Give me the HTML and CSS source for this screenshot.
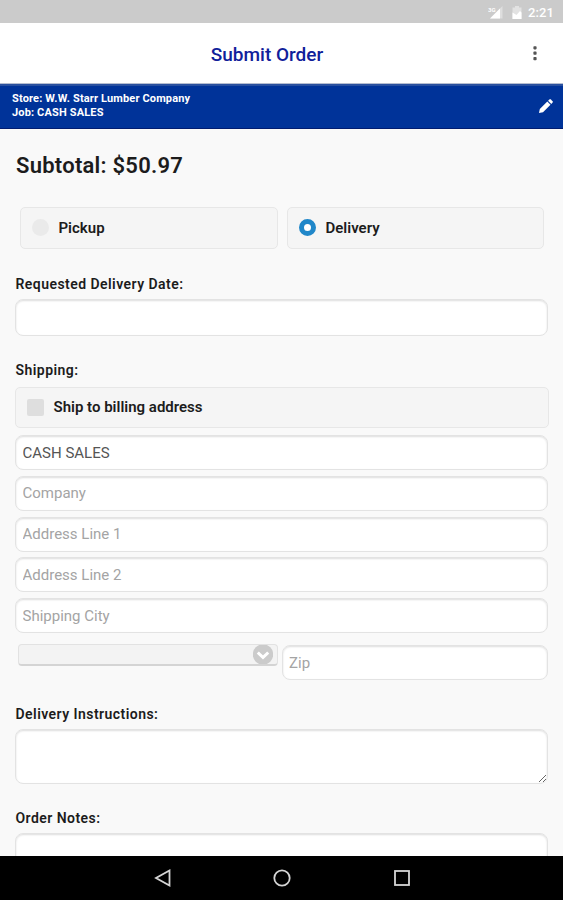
FILE: index.html
```html
<!DOCTYPE html>
<html lang="en">
<head>
  <meta charset="UTF-8" />
  <title>Submit Order</title>
  <link rel="stylesheet" href="styles.css">
</head>
<body>
  <div class="screen">
    <div class="status-bar">
      <svg class="signal-icon" width="15" height="13" viewBox="0 0 15 13">
        <path d="M14.5 0v12.5H2z" fill="#dedede" />
        <path d="M12 2.500v10H2z" fill="#fff" />
        <text x="0" y="6" class="signal-text">3G</text>
      </svg>
      <svg class="battery-icon" width="10" height="13" viewBox="0 0 10 13">
        <path d="M3 0h4v1.500h2.500V13h-9V1.500H3z" fill="#e2e2e2" />
        <path d="M.5 6.500l4 2.500L8 5l1.500 1.500V13h-9z" fill="#fff" />
      </svg>
      <span class="clock">2:21</span>
    </div>

    <header class="header">
      <h1>Submit Order</h1>
      <svg class="menu-icon" width="4" height="16" viewBox="0 0 4 16" fill="#555">
        <rect x=".4" y="1.200" width="3.200" height="3.200" rx=".8" />
        <rect x=".4" y="6.600" width="3.200" height="3.200" rx=".8" />
        <rect x=".4" y="12" width="3.200" height="3.200" rx=".8" />
      </svg>
    </header>

    <div class="store-bar">
      <div class="store-info">
        <div class="store-name">Store: W.W. Starr Lumber Company</div>
        <div class="job-name">Job: CASH SALES</div>
      </div>
      <svg class="edit-icon" width="14" height="14" viewBox="0 0 14 14" fill="#fff">
        <path d="M0 14l.8-4L8.300 2.500l3.200 3.200L4 13.200z" />
        <path d="M9.100 1.700L10.400.4q.7-.6 1.400 0l1.800 1.800q.6.700 0 1.400l-1.300 1.300z" />
      </svg>
    </div>

    <form class="content">
      <h2>Subtotal: $50.97</h2>

      <div class="methods">
        <label class="option">
          <input type="radio" name="method" class="radio" />
          <span class="pickup-text">Pickup</span>
        </label>
        <label class="option">
          <input type="radio" name="method" class="radio" checked />
          <span class="delivery-text">Delivery</span>
        </label>
      </div>

      <label class="field-label date-label" for="date">Requested Delivery Date:</label>
      <input type="text" id="date" class="field date-field" />

      <div class="field-label shipping-label">Shipping:</div>
      <label class="option billing">
        <input type="checkbox" class="checkbox" />
        <span class="billing-text">Ship to billing address</span>
      </label>

      <div class="address">
        <input type="text" class="field" value="CASH SALES" />
        <input type="text" class="field" placeholder="Company" />
        <input type="text" class="field" placeholder="Address Line 1" />
        <input type="text" class="field" placeholder="Address Line 2" />
        <input type="text" class="field" placeholder="Shipping City" />
      </div>

      <div class="state-zip">
        <div class="state-select">
          <svg width="20" height="19" viewBox="0 0 20 19">
            <circle cx="10" cy="9.500" r="10.200" fill="#cbcbcb" />
            <path d="M4.800 7.500l5.200 5 5.200-5" fill="none" stroke="#fff" stroke-width="3" />
          </svg>
        </div>
        <input type="text" class="field zip" placeholder="Zip" />
      </div>

      <label class="field-label instructions-label" for="instructions">Delivery Instructions:</label>
      <textarea id="instructions" class="field area"></textarea>

      <label class="field-label notes-label" for="notes">Order Notes:</label>
      <textarea id="notes" class="field area"></textarea>
    </form>

    <nav class="nav-bar">
      <svg width="18" height="18" viewBox="0 0 18 18">
        <path d="M16.500 1.500v15L3 9z" />
      </svg>
      <svg width="18" height="18" viewBox="0 0 18 18">
        <circle cx="9" cy="9" r="7.700" />
      </svg>
      <svg width="18" height="18" viewBox="0 0 18 18">
        <rect x="2" y="2" width="14" height="14" />
      </svg>
    </nav>
  </div>
</body>
</html>
```
FILE: styles.css
```css
* {
  box-sizing: border-box;
}

body {
  margin: 0;
  font-family: Roboto, "Liberation Sans", sans-serif;
  color: #1c1c1c;
}

.screen {
  display: flex;
  flex-direction: column;
  height: 900px;
  overflow: hidden;
  background: #f9f9f9;
}

.status-bar {
  flex: none;
  display: flex;
  align-items: center;
  justify-content: flex-end;
  height: 23px;
  padding: 2px 9px 0 0;
  background: #cbcbcb;
  color: #fff;
}

.signal-text {
  font-size: 6px;
  font-weight: 700;
  fill: #fff;
}

.battery-icon {
  margin: 0 6px 0 9px;
}

.clock {
  font-size: 13px;
  font-weight: 500;
  line-height: 20px;
  letter-spacing: 0.1px;
}

.header {
  flex: none;
  display: grid;
  grid-template-columns: 1fr auto 1fr;
  align-items: center;
  height: 61px;
  padding: 0 26px 0 0;
  background: #fff;
  border-bottom: 1px solid #b5bdd0;
}

.header h1 {
  grid-column: 2;
  margin: 2px 0 0;
  padding-right: 3px;
  font-size: 19px;
  font-weight: 500;
  color: #10209a;
}

.header::before {
  content: "";
  width: 26px;
}

.menu-icon {
  justify-self: end;
}

.store-bar {
  flex: none;
  display: flex;
  align-items: center;
  justify-content: space-between;
  height: 45px;
  padding: 0 10px 2px 12px;
  background: #003399;
  border-top: 2px solid #29509f;
  border-bottom: 1px solid #001c70;
  color: #fff;
}

.store-info {
  font-size: 11px;
  font-weight: 700;
  line-height: 14px;
  letter-spacing: 0.15px;
}

.content {
  flex: 1;
  min-height: 0;
  overflow: hidden;
  padding: 0 15px;
}

.content h2 {
  margin: 23px 0 0 1px;
  font-size: 22px;
  font-weight: 600;
  line-height: 28px;
  letter-spacing: 0.25px;
}

.methods {
  display: grid;
  grid-template-columns: 258px 257px;
  gap: 9px;
  margin: 27px 0 0 5px;
}

.option {
  display: flex;
  align-items: center;
  height: 42px;
  padding: 0 0 1px 11px;
  border: 1px solid #e7e7e7;
  border-radius: 5px;
  background: #f5f5f5;
  font-size: 15px;
  font-weight: 600;
}

.radio,
.checkbox {
  flex: none;
  appearance: none;
  width: 17px;
  height: 17px;
  margin: 0 9.500px 0 0;
}

.radio {
  border-radius: 50%;
  background: #eaeaea;
}

.radio:checked {
  border: 5px solid #2087c9;
  background: #fff;
}

.checkbox {
  border-radius: 2px;
  background: #dedede;
}

.field-label {
  display: block;
  margin-left: 0.5px;
  font-size: 14px;
  font-weight: 600;
  line-height: 18px;
  letter-spacing: 0.45px;
}

.date-label {
  margin-top: 26px;
}

.field {
  display: block;
  width: 533px;
  height: 35px;
  padding: 0 6.500px;
  border: 1px solid #e3e3e3;
  border-radius: 8px;
  background: #fff;
  box-shadow: inset 0 1px 2px #ddd;
  font-family: inherit;
  font-size: 15px;
  color: #555;
}

.field::placeholder {
  color: #a4a4a4;
}

.date-field {
  height: 37px;
  margin-top: 6px;
}

.shipping-label {
  margin-top: 25px;
}

.billing {
  height: 41px;
  margin-top: 8px;
  margin-right: -1px;
}

.address {
  display: grid;
  gap: 5.800px;
  margin-top: 7px;
}

.state-zip {
  display: flex;
  align-items: flex-start;
  gap: 4px;
  margin-top: 11px;
  padding-left: 3px;
}

.state-select {
  display: flex;
  justify-content: flex-end;
  width: 260px;
  height: 22px;
  padding-right: 4px;
  overflow: hidden;
  border: 1px solid #e2e2e2;
  border-bottom: 2px solid #d4d4d4;
  border-radius: 4px;
  background: #f3f3f3;
}

.zip {
  width: 266px;
  margin-top: 1px;
  padding: 0 6px;
}

.instructions-label {
  margin-top: 25px;
}

.area {
  height: 55px;
  margin-top: 6px;
  resize: vertical;
}

.notes-label {
  margin-top: 25px;
}

.nav-bar {
  flex: none;
  display: flex;
  justify-content: center;
  align-items: center;
  gap: 102px;
  height: 44px;
  background: #000;
}

.nav-bar svg {
  fill: none;
  stroke: #d5d5d5;
  stroke-width: 1.800;
}
```
